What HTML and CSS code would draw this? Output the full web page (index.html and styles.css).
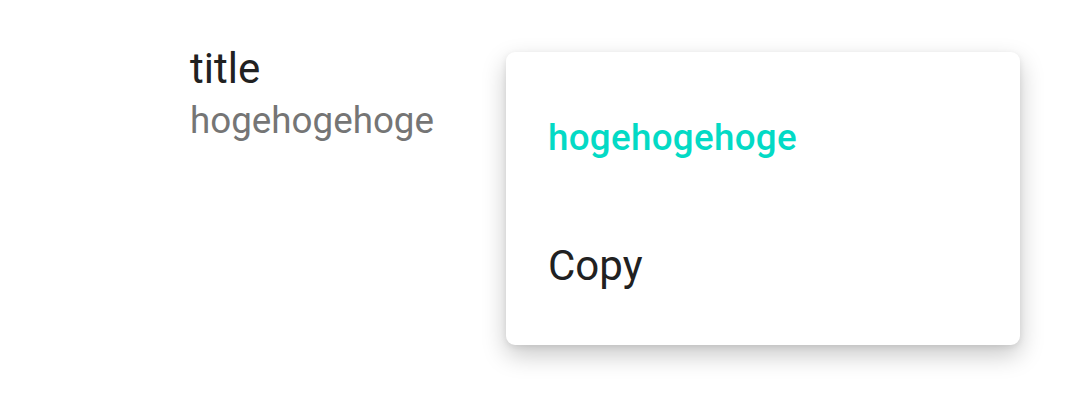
FILE: index.html
```html
<!DOCTYPE html>
<html lang="en">
  <head>
    <meta charset="UTF-8" />
    <title>Popup menu</title>
    <link rel="stylesheet" href="styles.css">
  </head>
  <body>
    <div class="screen">
      <div class="item">
        <div class="item-title">title</div>
        <div class="item-sub">hogehogehoge</div>
      </div>

      <div class="menu">
        <div class="menu-header">hogehogehoge</div>
        <div class="menu-row">Copy</div>
      </div>
    </div>
  </body>
</html>
```

FILE: styles.css
```css
body {
  margin: 0;
  background-color: #fff;
  font-family: Roboto, "Noto Sans", sans-serif;
}

.screen {
  display: flex;
  align-items: flex-start;
  height: 414px;
  padding-left: 190px;
  box-sizing: border-box;
}

.item {
  width: 316px;
  padding-top: 42px;
}

.item-title {
  font-size: 42px;
  line-height: 54px;
  color: #212121;
}

.item-sub {
  font-size: 36.75px;
  line-height: 49px;
  color: #757575;
}

.menu {
  margin-top: 52px;
  width: 514px;
  height: 293px;
  background-color: #fff;
  border-radius: 9px;
  box-shadow: 0 10px 24px rgba(0, 0, 0, 0.22), 0 2px 6px rgba(0, 0, 0, 0.08);
  padding: 62px 42px 0;
  box-sizing: border-box;
}

.menu-header {
  font-size: 36.75px;
  line-height: 48px;
  font-weight: 500;
  letter-spacing: 0.3px;
  color: #03dac5;
  margin-bottom: 76px;
}

.menu-row {
  font-size: 42px;
  line-height: 56px;
  color: #212121;
}
```
